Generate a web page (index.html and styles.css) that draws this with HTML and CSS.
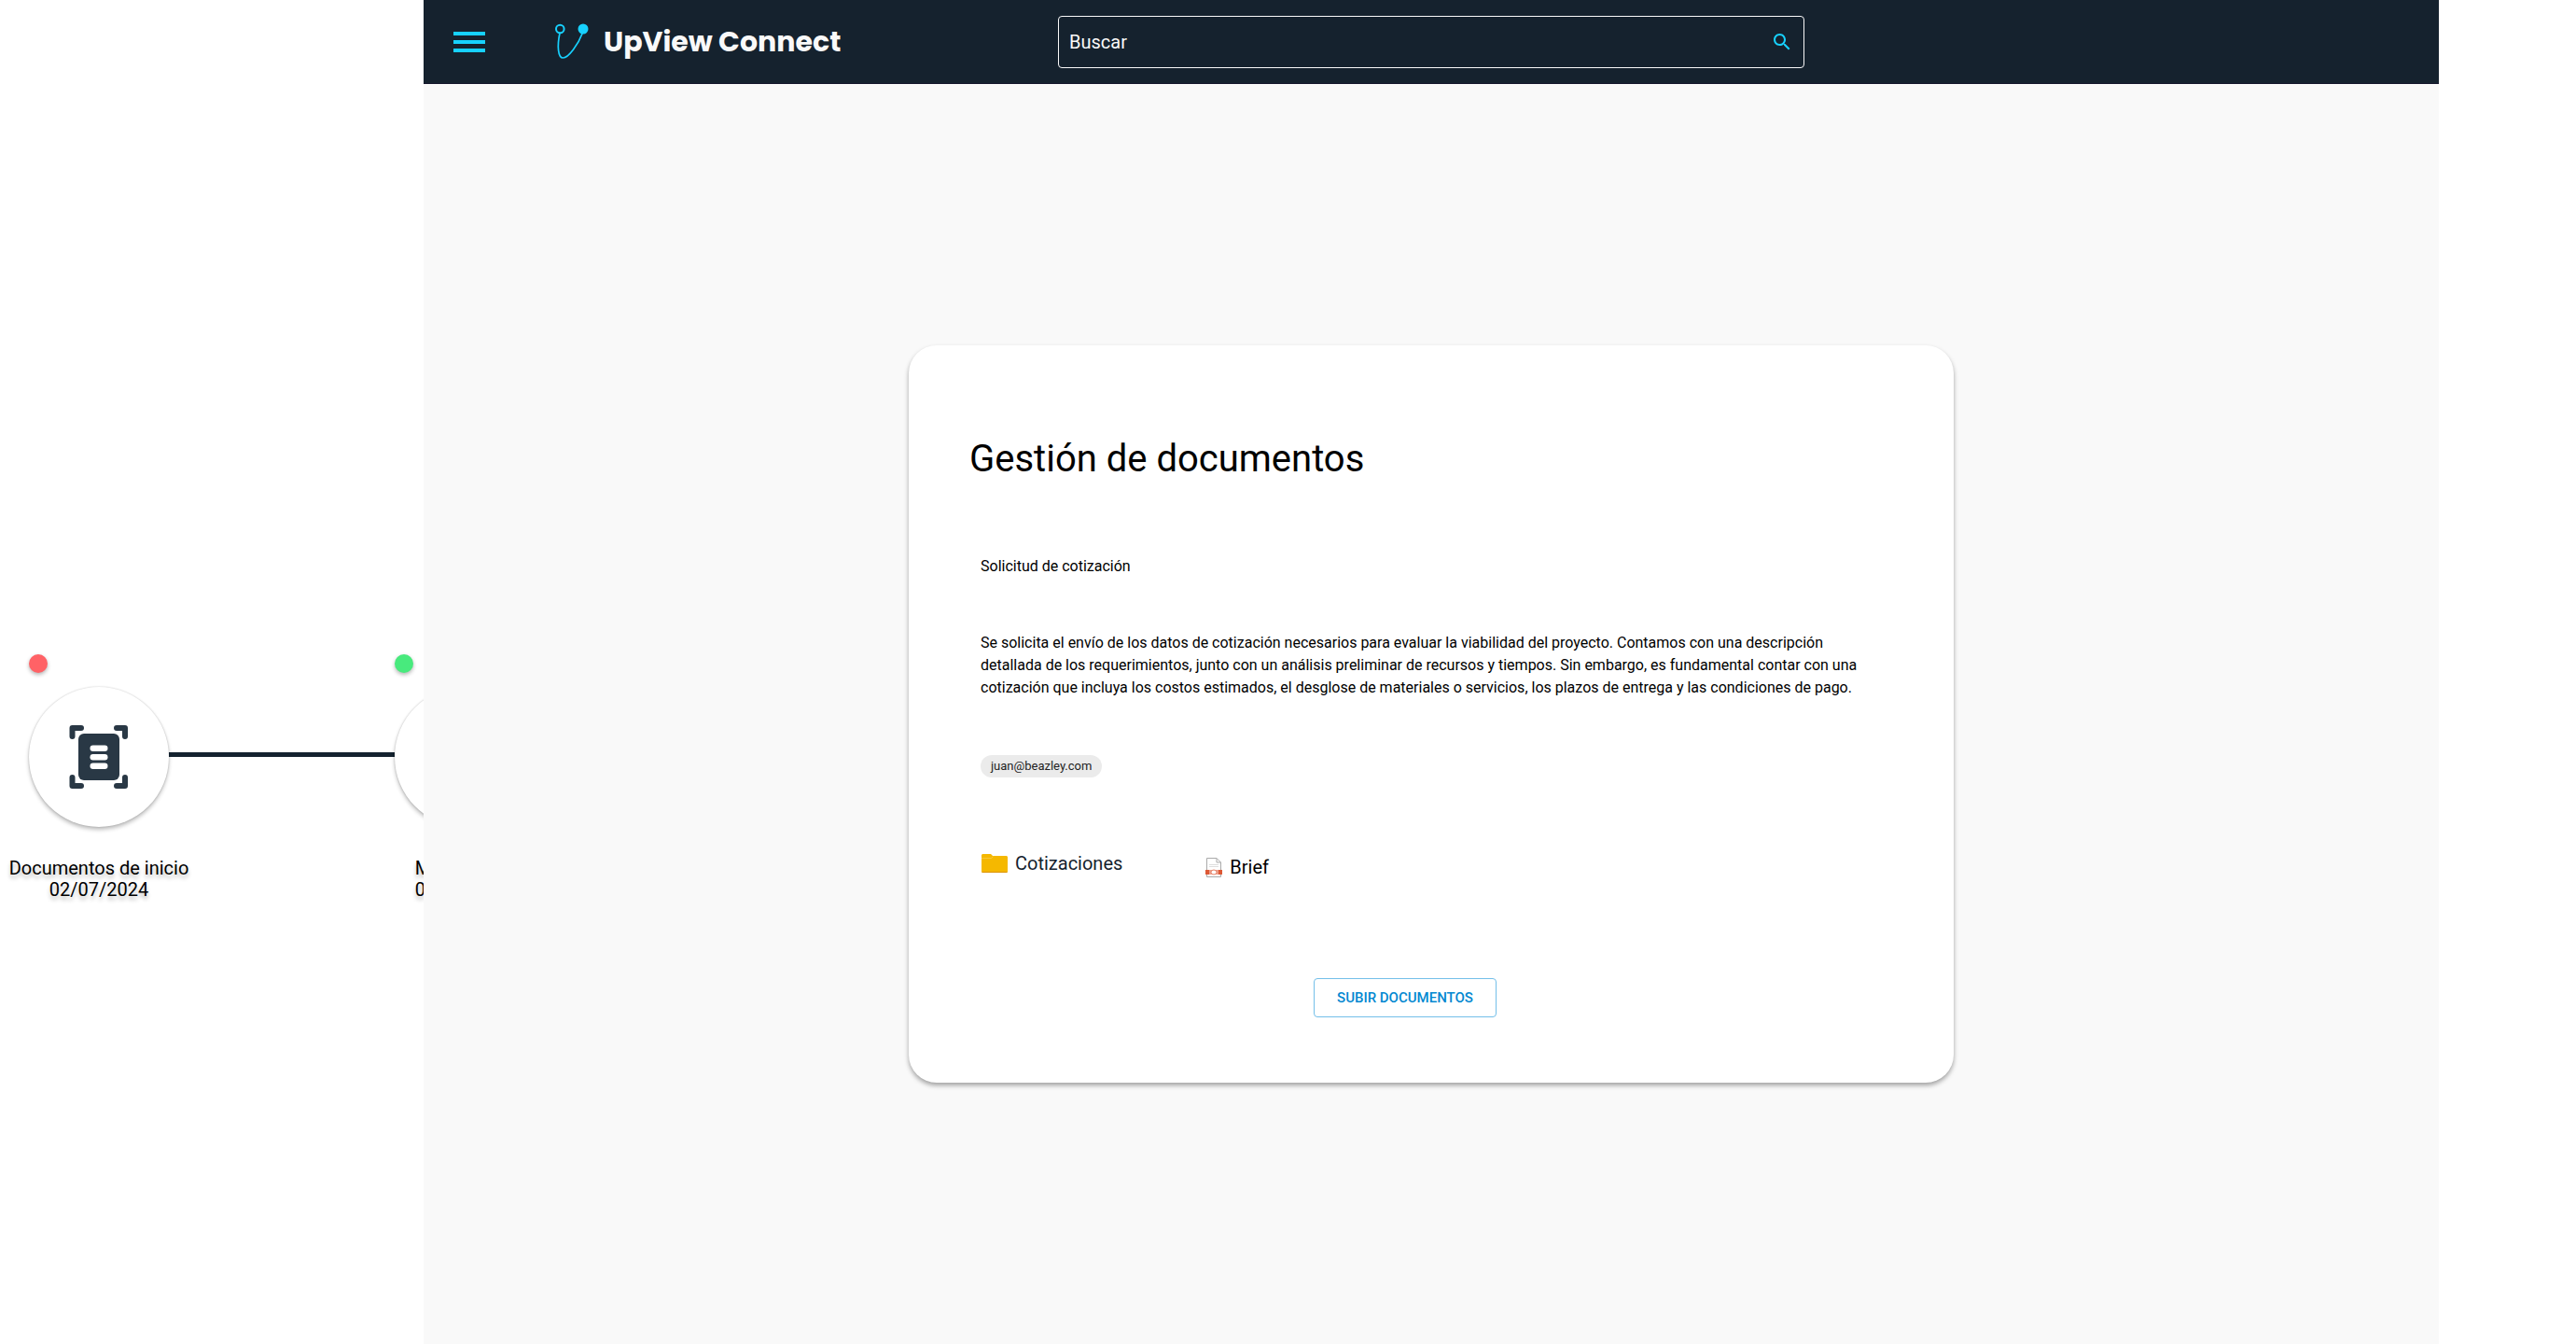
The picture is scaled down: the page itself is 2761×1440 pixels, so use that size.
FILE: index.html
```html
<!DOCTYPE html>
<html lang="es">
<head>
<meta charset="utf-8">
<meta name="viewport" content="width=device-width, initial-scale=1">
<title>UpView Connect</title>
<link rel="stylesheet" href="styles.css">
</head>
<body>
<div class="shell">
  <aside class="timeline">
    <ol class="steps">
      <li class="step">
        <span class="status status-late"></span>
        <span class="node">
          <svg width="64" height="70" viewBox="0 0 64 70" aria-hidden="true">
            <g fill="none" stroke="#293845" stroke-width="6" stroke-linecap="round" stroke-linejoin="round">
              <path d="M3.500 13V4H13"/><path d="M51 4H60V13"/><path d="M3.500 57V66H13"/><path d="M51 66H60V57"/>
            </g>
            <rect x="10" y="10" width="44" height="50" rx="6" fill="#293845"/>
            <g fill="#fff"><rect x="22.500" y="22.500" width="19" height="6.500" rx="3.200"/><rect x="22.500" y="32" width="19" height="6.500" rx="3.200"/><rect x="22.500" y="41.500" width="19" height="6.500" rx="3.200"/></g>
          </svg>
        </span>
        <p class="step-label">Documentos de inicio<br>02/07/2024</p>
      </li>
      <li class="link" aria-hidden="true"></li>
      <li class="step">
        <span class="status status-ok"></span>
        <span class="node"></span>
        <p class="step-label step-label-start">M<br>02/07/2024</p>
      </li>
    </ol>
  </aside>

  <div class="app">
    <header class="topbar">
      <div class="brand-area">
        <button class="menu-button" type="button" aria-label="Menú">
          <svg width="34" height="22" viewBox="0 0 34 22" fill="#17d1ff"><rect width="34" height="4"/><rect y="9" width="34" height="4"/><rect y="18" width="34" height="4"/></svg>
        </button>
        <a class="brand" href="#">
          <svg width="38" height="40" viewBox="0 0 38 40" aria-hidden="true">
            <g fill="none" stroke="#17d1ff"><circle cx="6.300" cy="6" r="4.300" stroke-width="2"/><path d="M6 10.500C3 24 4 37 9.500 37C15.500 37 26 22 30.500 10" stroke-width="1.700"/></g>
            <circle cx="31" cy="6" r="5.500" fill="#17d1ff"/>
          </svg>
          <span class="brand-name">UpView Connect</span>
        </a>
      </div>
      <form class="search" role="search">
        <input class="search-input" type="search" placeholder="Buscar" aria-label="Buscar">
        <button class="search-button" type="submit" aria-label="Buscar">
          <svg width="24" height="24" viewBox="0 0 24 24" fill="#17d1ff"><path d="M15.500 14h-.79l-.28-.27C15.410 12.590 16 11.110 16 9.500 16 5.910 13.090 3 9.500 3S3 5.910 3 9.500 5.910 16 9.500 16c1.610 0 3.090-.59 4.230-1.570l.27.28v.79l5 4.990L20.490 19l-4.990-5zm-6 0C7.010 14 5 11.990 5 9.500S7.010 5 9.500 5 14 7.010 14 9.500 11.990 14 9.500 14z"/></svg>
        </button>
      </form>
    </header>

    <main class="content">
      <section class="card">
        <h1 class="title">Gestión de documentos</h1>
        <div class="details">
          <p class="subject">Solicitud de cotización</p>
          <p class="message">Se solicita el envío de los datos de cotización necesarios para evaluar la viabilidad del proyecto. Contamos con una descripción detallada de los requerimientos, junto con un análisis preliminar de recursos y tiempos. Sin embargo, es fundamental contar con una cotización que incluya los costos estimados, el desglose de materiales o servicios, los plazos de entrega y las condiciones de pago.</p>
          <span class="chip">juan@beazley.com</span>
          <div class="files">
            <a class="file folder" href="#">
              <svg width="28" height="20" viewBox="0 0 28 20" aria-hidden="true"><path d="M1 0H10L12 2H27L28 3V19L27 20H1L0 19V1Z" fill="#f5b800"/><path d="M0 4.500H10.500L12.500 2.500" stroke="#f9d35f" stroke-width="0.600" fill="none"/><path d="M0 19H28L27 20H1Z" fill="#dc9300"/></svg>
              Cotizaciones
            </a>
            <a class="file brief" href="#">
              <svg width="18" height="21" viewBox="0 0 18 21" aria-hidden="true"><path d="M1.500 0.500H12L16.500 5V20.500H1.500ZM12 0.500V5H16.500" fill="#fff" stroke="#aaa"/><path d="M4 7.500H14M4 9.500H14" stroke="#ddd"/><rect y="13" width="18" height="5" fill="#dd5835"/><rect x="4" y="13" width="10" height="5" fill="#ec9f8a"/><ellipse cx="9" cy="15.500" rx="3" ry="2.500" fill="#fff" stroke="#e8836a"/></svg>
              Brief
            </a>
          </div>
        </div>
        <div class="actions"><button class="upload" type="button">SUBIR DOCUMENTOS</button></div>
      </section>
    </main>
  </div>
</div>
</body>
</html>
```
FILE: styles.css
```css
* { box-sizing: border-box; }

body {
  margin: 0;
  background: #fff;
  color: #000;
  font-family: Roboto, "Liberation Sans", sans-serif;
  font-size: 20px;
}

h1, p, ol { margin: 0; padding: 0; font-weight: 400; }
a { color: inherit; text-decoration: none; }
svg { display: block; flex: none; }
button { border: 0; padding: 0; background: none; font-family: inherit; cursor: pointer; }

.shell {
  display: grid;
  grid-template-columns: 454px minmax(0, 1fr) 147px;
  min-height: 100vh;
}

.timeline { overflow: hidden; min-width: 0; padding: 701px 0 0 31px; }
.steps { display: flex; list-style: none; }
.step { display: flex; flex: none; flex-direction: column; align-items: center; width: 150px; }
.status { align-self: flex-start; width: 20px; height: 20px; border-radius: 50%; box-shadow: 0 2px 4px rgba(0, 0, 0, 0.3); }
.status-late { background: #ff6266; }
.status-ok { background: #48ea7d; }
.node {
  display: grid;
  place-items: center;
  width: 150px;
  height: 150px;
  margin-top: 15px;
  border-radius: 50%;
  background: #fff;
  box-shadow: 0 3px 4px rgba(0, 0, 0, 0.25), 0 0 2px rgba(0, 0, 0, 0.2);
}
.step-label { margin-top: 33px; line-height: 23px; text-align: center; white-space: nowrap; text-shadow: 0 4px 4px rgba(0, 0, 0, 0.25); }
.step-label-start { text-align: left; }
.link { flex: none; width: 242px; height: 5px; margin-top: 105px; background: #14222f; }

.app { display: flex; flex-direction: column; min-width: 0; background: #f9f9f9; }
.topbar {
  display: grid;
  grid-template-columns: 1fr minmax(0, 800px) 1fr;
  align-items: center;
  height: 90px;
  background: #15222e;
  border-bottom: 1px solid #14152b;
}
.brand-area { display: flex; align-items: center; gap: 74px; padding-left: 32px; }
.brand { display: flex; align-items: center; gap: 15px; color: #f9f9f9; }
.brand-name { font-family: Poppins, Inter, sans-serif; font-size: 30px; font-weight: 700; line-height: 40px; white-space: nowrap; }

.search {
  display: flex;
  align-items: center;
  height: 56px;
  padding: 0 11px;
  border: 1px solid #f9f9f9;
  border-radius: 4px;
}
.search-input { flex: 1; min-width: 0; border: 0; padding: 0; outline: 0; background: none; color: #f9f9f9; font-family: inherit; font-size: 20px; }
.search-input::placeholder { color: #f9f9f9; opacity: 1; }

.content { display: grid; flex: 1; place-items: center; padding: 24px; }
.card {
  width: 100%;
  max-width: 1120px;
  padding: 98px 65px 70px;
  border-radius: 30px;
  background: #fff;
  box-shadow: 0 3px 5px rgba(0, 0, 0, 0.35);
}
.title { font-size: 40px; line-height: 48px; }
.details { padding: 79px 0 0 12px; font-size: 16px; line-height: 24px; }
.message { max-width: 964px; margin-top: 58px; }
.chip { display: table; margin-top: 60px; padding: 0 11px; border-radius: 12px; background: #ebebeb; color: #222; font-size: 13px; line-height: 24px; }
.files { display: flex; align-items: flex-start; margin-top: 80px; font-size: 20px; gap: 88px; }
.file { display: flex; align-items: center; gap: 8px; padding-left: 1px; }
.folder { color: #15222e; }
.brief { padding-top: 4px; }
.actions { display: flex; justify-content: center; margin-top: 107px; padding-right: 56px; }
.upload { height: 42px; padding: 0 24px; border: 1px solid #74bfe9; border-radius: 4px; color: #0288d1; font-size: 15px; font-weight: 500; }
```
